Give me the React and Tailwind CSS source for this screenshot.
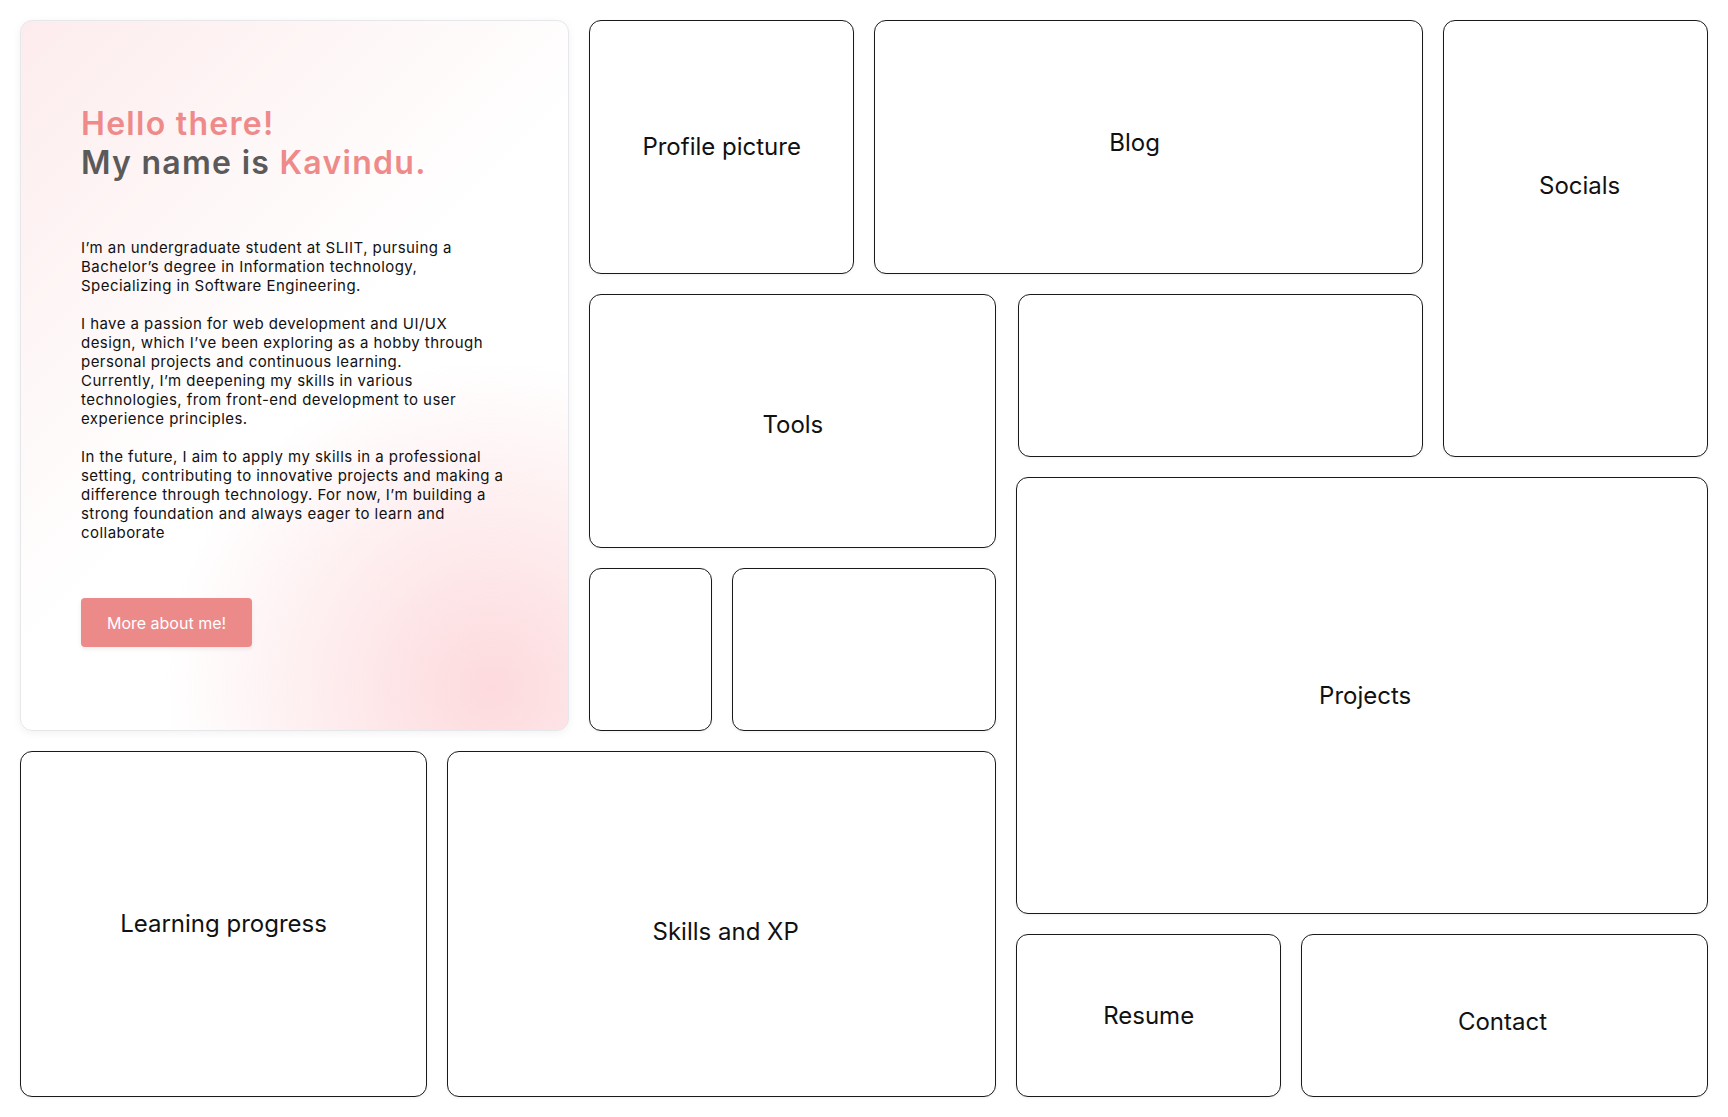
const font = { fontFamily: "Inter, 'Noto Sans', sans-serif" };

function Box({ className = "", children, labelClass = "" }) {
  return (
    <div
      className={`rounded-xl border border-[#1a1a1a] bg-white shadow-[0_1px_3px_rgba(0,0,0,0.06)] flex min-h-0 ${className}`}
    >
      {children && (
        <span className={`text-2xl text-[#111] leading-[30px] ${labelClass}`}>
          {children}
        </span>
      )}
    </div>
  );
}

function Hero() {
  return (
    <div className="col-start-1 col-span-4 row-start-1 row-span-8 rounded-xl border border-gray-200 shadow-[0_2px_8px_rgba(0,0,0,0.06)] bg-[radial-gradient(circle_at_86%_94%,#fddadd_0%,rgba(253,218,221,0)_40%),linear-gradient(135deg,#fdeced_0%,#ffffff_50%)] px-[60px] pt-[84px] min-h-0 overflow-hidden">
      <h1 className="text-[32px] leading-[38.5px] font-semibold tracking-[0.04em]">
        <span className="text-[#ee8a8a]">Hello there!</span>
        <br />
        <span className="text-[#5a5a5a]">My name is </span>
        <span className="text-[#ee8a8a]">Kavindu.</span>
      </h1>

      <div className="mt-[56px] text-[15px] leading-[19px] tracking-[0.03em] text-[#111]">
        <p className="mb-[19px]">
          I’m an undergraduate student at SLIIT, pursuing a Bachelor’s degree in
          Information technology, Specializing in Software Engineering.
        </p>
        <p className="mb-[19px]">
          I have a passion for web development and UI/UX
          <br />
          design, which I’ve been exploring as a hobby through personal projects
          and continuous learning.
          <br />
          Currently, I’m deepening my skills in various technologies, from
          front-end development to user experience principles.
        </p>
        <p>
          In the future, I aim to apply my skills in a professional setting,
          contributing to innovative projects and making a difference through
          technology. For now, I’m building a strong foundation and always
          eager to learn and collaborate
        </p>
      </div>

      <button className="mt-[56px] w-[171px] h-[49px] rounded-[4px] bg-[#ec8a8a] text-white text-base shadow-[0_2px_4px_rgba(0,0,0,0.08)]">
        More about me!
      </button>
    </div>
  );
}

export default function App() {
  return (
    <div
      style={font}
      className="h-screen bg-white p-5 grid grid-cols-12 grid-rows-12 gap-5"
    >
      <Hero />

      <Box className="col-start-5 col-span-2 row-start-1 row-span-3 items-center justify-center">
        Profile picture
      </Box>
      <Box className="col-start-7 col-span-4 row-start-1 row-span-3 items-center justify-center pr-7 pb-2">
        Blog
      </Box>
      <Box className="col-start-11 col-span-2 row-start-1 row-span-5 justify-center items-start pt-[150px] pl-2">
        Socials
      </Box>

      <Box className="col-start-5 col-span-3 row-start-4 row-span-3 items-center justify-center pt-2">
        Tools
      </Box>
      <Box className="col-start-8 col-span-3 row-start-4 row-span-2 ml-[2px]" />

      <Box className="col-start-8 col-span-5 row-start-6 row-span-5 items-center justify-center pl-[6px]">
        Projects
      </Box>

      <Box className="col-start-5 col-span-1 row-start-7 row-span-2" />
      <Box className="col-start-6 col-span-2 row-start-7 row-span-2" />

      <Box className="col-start-1 col-span-3 row-start-9 row-span-4 items-center justify-center">
        Learning progress
      </Box>
      <Box className="col-start-4 col-span-4 row-start-9 row-span-4 items-center justify-center pt-4 pl-2">
        Skills and XP
      </Box>

      <Box className="col-start-8 col-span-2 row-start-11 row-span-2 items-center justify-center">
        Resume
      </Box>
      <Box className="col-start-10 col-span-3 row-start-11 row-span-2 items-center justify-center pt-3 pr-1">
        Contact
      </Box>
    </div>
  );
}
